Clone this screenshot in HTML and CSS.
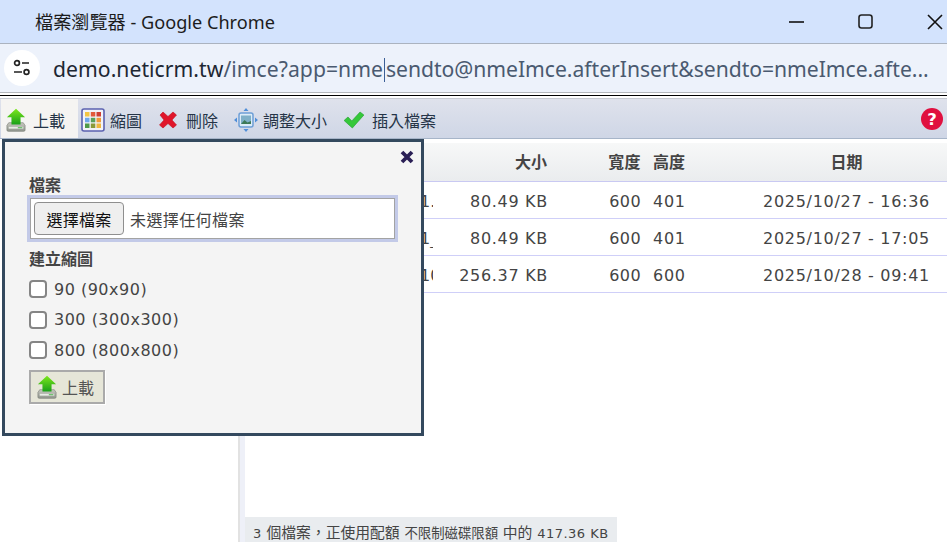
FILE: index.html
```html
<!DOCTYPE html>
<html lang="zh-Hant">
<head>
<meta charset="utf-8">
<title>檔案瀏覽器</title>
<link rel="stylesheet" href="styles.css">
</head>
<body>
<svg class="defs" width="0" height="0" aria-hidden="true">
  <defs>
    <linearGradient id="gArrow" x1="0" y1="0" x2="0" y2="1"><stop offset="0" stop-color="#7ee81c"/><stop offset="1" stop-color="#18a018"/></linearGradient>
    <linearGradient id="gDrive" x1="0" y1="0" x2="0" y2="1"><stop offset="0" stop-color="#c8c8c0"/><stop offset="1" stop-color="#8f948c"/></linearGradient>
    <symbol id="upload" viewBox="0 0 22 26">
      <path d="M3 16h16l2 3v5a1.500 1.500 0 0 1-1.500 1.500h-17A1.500 1.500 0 0 1 1 24v-5z" fill="url(#gDrive)" stroke="#7c8078" stroke-width=".7"/>
      <path d="M3 20.500h16v2H3z" fill="#e8ece6"/>
      <path d="M13 21h5v1h-5z" fill="#45b045"/>
      <path d="M11 .5 21 10h-5v8H6v-8H1z" fill="url(#gArrow)"/>
    </symbol>
  </defs>
</svg>

<header class="titlebar">
  <span class="title">檔案瀏覽器 - Google Chrome</span>
  <div class="winctl">
    <svg class="win-min" width="16" height="16" viewBox="0 0 16 16"><path d="M0 8h15" stroke="#111" stroke-width="1.600"/></svg>
    <svg class="win-max" width="16" height="16" viewBox="0 0 16 16"><rect x="1" y="1" width="13" height="13" rx="2.500" fill="none" stroke="#222" stroke-width="1.600"/></svg>
    <svg class="win-close" width="16" height="16" viewBox="0 0 16 16"><path d="M1 1l14 14M15 1 1 15" stroke="#111" stroke-width="1.600"/></svg>
  </div>
</header>

<div class="addressbar">
  <span class="site-chip">
    <svg width="20" height="20" viewBox="0 0 20 20"><circle cx="5" cy="5" r="2.400" fill="none" stroke="#222" stroke-width="1.700"/><path d="M10 5h7M2 14h8" stroke="#222" stroke-width="1.700"/><circle cx="14.500" cy="14" r="2.400" fill="none" stroke="#222" stroke-width="1.700"/></svg>
  </span>
  <span class="url"><span class="host">demo.neticrm.tw</span><span class="path">/imce?app=nme</span><span class="caret"></span>sendto@nmeImce.afterInsert&amp;sendto=nmeImce.afte...</span>
</div>
<div class="chrome-rule"></div>

<nav class="toolbar">
  <a class="tool active"><svg class="ic" width="20" height="24"><use href="#upload"/></svg>上載</a>
  <a class="tool">
    <svg class="ic ic-wide" width="24" height="24" viewBox="0 0 24 24">
      <rect x="1" y="1" width="22" height="22" rx="2" fill="#f2f3f8" stroke="#5b62b0" stroke-width="1.600"/>
      <rect x="4" y="4" width="4.500" height="4.500" fill="#f3c544"/><rect x="9.800" y="4" width="4.500" height="4.500" fill="#e25a3a"/><rect x="15.500" y="4" width="4.500" height="4.500" fill="#cf4034"/>
      <rect x="4" y="9.800" width="4.500" height="4.500" fill="#6fa8ec"/><rect x="9.800" y="9.800" width="4.500" height="4.500" fill="#5aa05a"/><rect x="15.500" y="9.800" width="4.500" height="4.500" fill="#ef9a3a"/>
      <rect x="4" y="15.500" width="4.500" height="4.500" fill="#4f9a4a"/><rect x="9.800" y="15.500" width="4.500" height="4.500" fill="#8a9a3a"/><rect x="15.500" y="15.500" width="4.500" height="4.500" fill="#f0b840"/>
    </svg>縮圖</a>
  <a class="tool">
    <svg class="ic" width="20" height="20" viewBox="0 0 20 20"><path d="M2 5 5 2l5 4.500L15 2l3.500 3L14 10l4.500 5-3.500 3-5-4.500L5 18l-3.500-3L6 10z" fill="#e0162b" stroke="#c01020" stroke-width=".6" stroke-linejoin="round"/></svg>刪除</a>
  <a class="tool">
    <svg class="ic ic-wide" width="24" height="24" viewBox="0 0 24 24">
      <rect x="5" y="5" width="14" height="14" rx="2" fill="#dcecf8" stroke="#6d9ed6" stroke-width="1.500"/>
      <rect x="7" y="7.500" width="10" height="8.500" fill="#7fb0c8"/><path d="M7 16l3.500-4 3 2.500 3.500-1.500v3z" fill="#3d7a58"/>
      <path d="M12 0l2.500 3h-5zM12 24l-2.500-3h5zM0 12l3-2.500v5zM24 12l-3 2.500v-5z" fill="#4f8ed8"/>
    </svg>調整大小</a>
  <a class="tool">
    <svg class="ic" width="22" height="20" viewBox="0 0 20 20" preserveAspectRatio="none"><path d="M1 10.500 4.500 7l3.500 4L15.500 2 19 5 8.500 18z" fill="#35c83a" stroke="#22a02c" stroke-width=".6" stroke-linejoin="round"/></svg>插入檔案</a>
  <svg class="help" width="22" height="22" viewBox="0 0 24 24"><circle cx="12" cy="12" r="12" fill="#e0103f"/><text x="12" y="18.500" text-anchor="middle" class="help-q">?</text></svg>
</nav>

<main class="workspace">
  <aside class="tree"></aside>
  <div class="splitter"></div>
  <section class="files">
    <div class="row head">
      <span class="c-name"></span><span class="c-size">大小</span><span class="c-w">寬度</span><span class="c-h">高度</span><span class="c-date">日期</span>
    </div>
    <div class="row"><span class="c-name">1.</span><span class="c-size">80.49 KB</span><span class="c-w">600</span><span class="c-h">401</span><span class="c-date">2025/10/27 - 16:36</span></div>
    <div class="row"><span class="c-name">1_</span><span class="c-size">80.49 KB</span><span class="c-w">600</span><span class="c-h">401</span><span class="c-date">2025/10/27 - 17:05</span></div>
    <div class="row"><span class="c-name">10</span><span class="c-size">256.37 KB</span><span class="c-w">600</span><span class="c-h">600</span><span class="c-date">2025/10/28 - 09:41</span></div>
    <div class="spacer"></div>
    <div class="status"><span class="num">3</span> 個檔案&#xFF0C;正使用配額 <span class="status-sm">不限制磁碟限額</span> 中的 <span class="num">417.36 KB</span></div>
  </section>
</main>

<form class="dialog">
  <svg class="dlg-close" width="14" height="14" viewBox="0 0 14 14"><path d="M2 2l10 10M12 2 2 12" stroke="#2a1f55" stroke-width="3.800"/></svg>
  <div class="field-label">檔案</div>
  <div class="filebox"><button type="button" class="choose">選擇檔案</button><span class="nofile">未選擇任何檔案</span></div>
  <div class="field-label second">建立縮圖</div>
  <label class="check"><input type="checkbox">90 (90x90)</label>
  <label class="check"><input type="checkbox">300 (300x300)</label>
  <label class="check"><input type="checkbox">800 (800x800)</label>
  <button type="button" class="submit"><svg width="20" height="24"><use href="#upload"/></svg>上載</button>
</form>
</body>
</html>
```
FILE: styles.css
```css
* { box-sizing: border-box; }
html, body { margin: 0; height: 542px; overflow: hidden; background: #fff; }
body {
  display: flex; flex-direction: column;
  font-family: "DejaVu Sans", "Noto Sans CJK TC", sans-serif;
  color: #444;
}
.defs { position: absolute; }

.titlebar {
  height: 44px; flex: none; background: #d3e3fd; border-bottom: 1px solid #abb3bf;
  display: flex; align-items: center; padding-left: 35px;
}
.title { font: 18.150px "Noto Sans", "Noto Sans CJK TC", sans-serif; color: #1c1c1c; margin-top: -2px; }
.winctl { margin-left: auto; display: flex; align-items: center; }
.win-min { margin-right: 53px; }
.win-max { margin-right: 53px; }
.win-close { margin-right: 4px; }

.addressbar {
  height: 49px; flex: none; background: #edf2fb; border-bottom: 1px solid #b4b8bd;
  display: flex; align-items: center; padding-left: 4px;
}
.site-chip {
  width: 36px; height: 36px; border-radius: 50%; background: #fff;
  display: flex; align-items: center; justify-content: center; flex: none;
}
.url {
  margin-left: 13px; white-space: nowrap; color: #4a5a70; letter-spacing: -.03px;
  font: 21.150px "Noto Sans", sans-serif;
}
.host { color: #1d2733; letter-spacing: .04px; }
.path { letter-spacing: .04px; }
.caret { display: inline-block; width: 1px; height: 24px; background: #3b5f96; vertical-align: -5px; margin: 0 1px; }

.chrome-rule { height: 6px; flex: none; border-bottom: 1px solid #c6cad2; background: linear-gradient(#fff 0 2px, #000 2px 3px, #fff 3px); }

.toolbar {
  height: 40px; flex: none; display: flex; align-items: center; padding-left: 1px;
  background: linear-gradient(#dfe2ec, #cfd6e6);
  border-bottom: 1px solid #a7b5c9;
}
.tool {
  height: 100%; display: flex; align-items: center; padding: 2px 8px 0;
  font: 16px "Noto Sans CJK TC", sans-serif; color: #253447;
}
.tool .ic { margin-right: 8px; flex: none; }
.tool .ic-wide { margin-right: 5px; }
.tool.active { background: #f5f4f2; padding: 2px 13px 0 5px; }
.tool.active .ic { margin-right: 7px; }
.active + .tool { padding-left: 3px; }
.tool:last-of-type .ic { margin-right: 7px; }
.help { margin-left: auto; margin-right: 4px; }
.help-q { font: bold 18px "DejaVu Sans", sans-serif; fill: #fff; }

.workspace { flex: 1; min-height: 0; display: flex; }
.tree { width: 238px; flex: none; background: #fff; }
.splitter { width: 7px; flex: none; background: #eef0f8; border-left: 2px solid #e2e2e2; }
.files { flex: 1; min-width: 0; display: flex; flex-direction: column; padding-top: 4px; }

.row {
  display: grid; grid-template-columns: 188px 114px 93px 13px 96px 1fr;
  height: 37px; align-items: center; flex: none; padding-top: 2px;
  border-bottom: 1px solid #cfcff8;
  font-size: 16px; letter-spacing: .7px; color: #444;
}
.row.head {
  height: 39px; padding: 0 0 3px; font-weight: bold; letter-spacing: 0;
  background: linear-gradient(#f7f8f8, #eaecee);
  border-bottom-color: #c9c9f2;
}
.c-name { overflow: hidden; white-space: nowrap; padding-left: 175px; letter-spacing: 0; }
.c-size, .c-w { text-align: right; margin-right: -1px; }
.head .c-size { margin-right: 0; }
.c-w { letter-spacing: .4px; }
.c-h { grid-column: 5; }
.c-date { grid-column: 6; text-align: center; padding-right: 3px; white-space: nowrap; }

.spacer { flex: 1; }
.status {
  width: 372px; height: 25px; flex: none; background: #e9ecef; padding: 6px 0 0 8px;
  font-size: 14.800px; white-space: nowrap; color: #444; line-height: 19px;
}
.status-sm { font-size: 13.400px; }
.num { font-size: 13px; letter-spacing: .5px; }

.dialog {
  position: absolute; left: 2px; top: 139px; width: 422px; height: 297px;
  background: #f4f4f4; border: 3px solid #34495e; padding: 31px 24px 0;
}
.dlg-close { position: absolute; right: 7px; top: 8px; }
.field-label { font-weight: bold; font-size: 16px; height: 22px; padding-top: 4px; line-height: 18px; color: #444; }
.field-label.second { height: 22px; padding: 0; line-height: 22px; margin-top: 7px; margin-bottom: 9px; }
.filebox {
  margin: 0 0 0 -2px; width: 371px; height: 47px; background: #fff;
  border: 3px solid #c3cae8; box-shadow: inset 0 0 0 1px #a3a3a3;
  display: flex; align-items: center; padding-left: 4px;
}
.choose {
  width: 90px; height: 33px; padding: 0; background: #efefef;
  border: 1px solid #8f8f8f; border-radius: 4px; letter-spacing: .3px;
  font: 16px "Noto Sans CJK TC", sans-serif; color: #111;
}
.nofile { margin-left: 6px; font: 16px "Noto Sans CJK TC", sans-serif; letter-spacing: .4px; color: #444; }
.check { display: flex; align-items: center; height: 18px; margin-bottom: 12.500px; font-size: 16px; letter-spacing: .5px; color: #444; white-space: nowrap; }
.check input {
  appearance: none; width: 18px; height: 18px; margin: 0 7px 0 0; background: #fff;
  border: 2px solid #858585; border-radius: 4px;
}
.submit {
  display: flex; align-items: center; width: 76px; height: 34px; padding: 0 0 0 6px; margin-top: -1.500px;
  background: #e6e6d8; border: 2px solid #aaa; box-shadow: 1px 1px 0 #fff;
  font: 16px "Noto Sans CJK TC", sans-serif; color: #555;
}
.submit svg { margin-right: 5px; }
```
